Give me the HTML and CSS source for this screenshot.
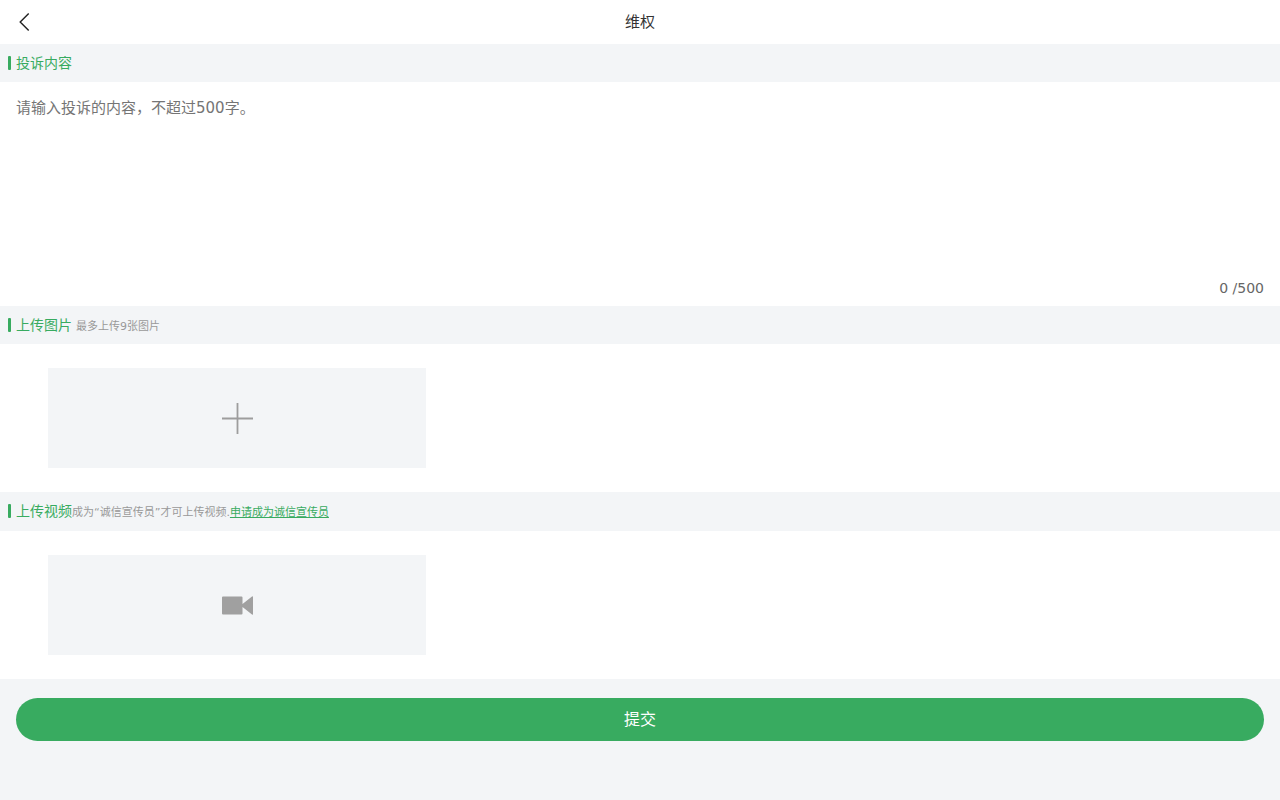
FILE: index.html
```html
<!DOCTYPE html>
<html lang="zh-CN">
<head>
    <meta charset="UTF-8">
    <meta name="viewport" content="width=device-width, initial-scale=1.0">
    <title>维权</title>
    <link rel="stylesheet" href="styles.css">
</head>
<body>

<header class="header">
    <button type="button" class="back" aria-label="返回">
        <svg width="12" height="20" viewBox="0 0 12 20" fill="none" stroke="#222" stroke-width="1.4">
            <path d="M10.7 1.4 2.2 10l8.5 8.6"/>
        </svg>
    </button>
    <h1>维权</h1>
</header>

<form>
    <!-- 投诉内容 -->
    <div class="section-title">
        <label for="content">投诉内容</label>
    </div>
    <div class="content-box">
        <textarea id="content" maxlength="500" placeholder="请输入投诉的内容，不超过500字。"></textarea>
        <p class="count">0 /500</p>
    </div>

    <!-- 上传图片 -->
    <div class="section-title">
        <h2>上传图片</h2>
        <span class="tip tip-space">最多上传9张图片</span>
    </div>
    <div class="upload-list">
        <button type="button" class="upload" aria-label="上传图片">
            <svg width="32" height="32" viewBox="0 0 32 32" stroke="#9d9d9d" stroke-width="1.8">
                <path d="M1 16.5h31M16.5 1v31"/>
            </svg>
        </button>
    </div>

    <!-- 上传视频 -->
    <div class="section-title section-video">
        <h2>上传视频</h2>
        <span class="tip">成为“诚信宣传员”才可上传视频.<a href="#">申请成为诚信宣传员</a></span>
    </div>
    <div class="upload-list">
        <button type="button" class="upload" aria-label="上传视频">
            <svg width="32" height="32" viewBox="0 0 32 32" fill="#a0a0a0">
                <path d="M2 7.500h18.500q1 0 1 1v6.500l9.500-7.500q1-.6 1 .5v17q0 1.100-1 .5l-9.500-7.500v6.500q0 1-1 1H2q-1 0-1-1v-16q0-1 1-1z"/>
            </svg>
        </button>
    </div>

    <div class="footer">
        <button type="submit" class="submit">提交</button>
    </div>
</form>

</body>
</html>
```

FILE: styles.css
```css
* {
    box-sizing: border-box;
}

body {
    margin: 0;
    background-color: #f3f5f7;
    color: #333;
    font-family: "DejaVu Sans", "Noto Sans CJK SC", sans-serif;
    font-size: 14px;
}

h1, h2, p {
    margin: 0;
    font-weight: normal;
}

button, textarea {
    font-family: inherit;
    border: none;
    padding: 0;
}

button {
    cursor: pointer;
}

.header {
    display: grid;
    grid-template-columns: 48px 1fr 48px;
    height: 44px;
    background-color: #fff;
}

.header h1 {
    font-size: 15px;
    line-height: 44px;
    text-align: center;
}

.back {
    display: flex;
    align-items: center;
    justify-content: center;
    height: 44px;
    background: none;
}

.section-title {
    display: flex;
    align-items: baseline;
    height: 38px;
    padding: 9px 8px;
    line-height: 20px;
    color: #38ab60;
}

.section-video {
    height: 39px;
}

/* 标题左侧的绿色竖条 */
.section-title::before {
    content: "";
    align-self: flex-start;
    width: 3px;
    height: 14px;
    margin: 3px 5px 0 0;
    border-radius: 1px;
    background-color: #38ab60;
}

.section-title h2 {
    font-size: 14px;
}

.tip {
    font-size: 11px;
    color: #999;
}

.tip-space {
    margin-left: 4px;
}

.tip a {
    color: #38ab60;
}

.content-box {
    padding: 16px 16px 8px;
    background-color: #fff;
}

.content-box textarea {
    display: block;
    width: 100%;
    height: 180px;
    font-size: 15px;
    line-height: 20px;
    color: #333;
    resize: none;
    outline: none;
}

.content-box textarea::placeholder {
    color: #757575;
}

.count {
    line-height: 20px;
    text-align: right;
    color: #666;
}

.upload-list {
    display: grid;
    grid-template-columns: repeat(3, 1fr);
    gap: 25px;
    padding: 24px 48px;
    background-color: #fff;
}

.upload {
    display: flex;
    align-items: center;
    justify-content: center;
    height: 100px;
    background-color: #f3f5f7;
}

.footer {
    padding: 19px 16px;
}

.submit {
    display: block;
    width: 100%;
    height: 43px;
    padding-bottom: 4px;
    border-radius: 22px;
    background-color: #38ab60;
    color: #fff;
    font-size: 16px;
}
```
